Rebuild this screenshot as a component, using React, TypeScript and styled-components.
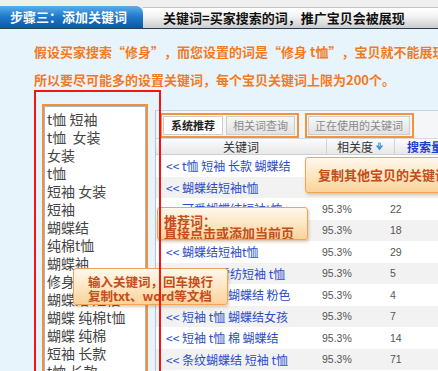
import styled, { createGlobalStyle } from "styled-components";

const GlobalStyle = createGlobalStyle`
  html, body {
    margin: 0;
    padding: 0;
  }
  body {
    background: #e8f4fc;
    font-family: "Noto Sans CJK SC", "Noto Sans", sans-serif;
    overflow: hidden;
  }
`;

const Page = styled.div`
  position: relative;
  width: 438px;
  height: 371px;
  overflow: hidden;
  background: #e8f4fc;
`;

const TopBar = styled.div`
  display: flex;
  align-items: flex-end;
  height: 28px;
  background: #efefef;
  border-bottom: 1px solid #2c3e52;
`;

const StepTab = styled.div`
  width: 143px;
  height: 22px;
  box-sizing: border-box;
  padding-left: 10px;
  border-radius: 0 7px 0 0;
  background: linear-gradient(#5aaeea, #1f78c8 50%, #0c58a6);
  color: #fff;
  font-size: 13px;
  font-weight: bold;
  line-height: 22px;
  white-space: nowrap;
`;

const HintBar = styled.div`
  flex: 1;
  height: 20px;
  padding-left: 20px;
  border-top: 1px solid #c4c4c4;
  background: linear-gradient(#ffffff, #f3f3f3 40%, #cdcdcd);
  color: #111;
  font-size: 13px;
  font-weight: bold;
  line-height: 20px;
  white-space: nowrap;
`;

const Notice = styled.div`
  padding: 9px 0 0 34px;
  color: #f47a1e;
  font-size: 13px;
  font-weight: bold;
  line-height: 28px;
  white-space: nowrap;
`;

const Quote = styled.span<{ $open?: boolean }>`
  display: inline-block;
  width: 13px;
  text-align: ${(p) => (p.$open ? "right" : "left")};
`;

const Main = styled.div`
  display: flex;
  align-items: flex-start;
  gap: 7px;
  padding: 10px 0 0 42px;
`;

const KeywordBox = styled.div`
  flex-shrink: 0;
  width: 106px;
  height: 290px;
  box-sizing: border-box;
  border: 2px solid #f39138;
`;

const KeywordText = styled.div`
  height: 100%;
  box-sizing: border-box;
  padding: 3px 0 0 2px;
  border: 1px solid #a3b6c8;
  background: #fff;
  color: #444;
  font-size: 14px;
  line-height: 18px;
  white-space: pre;
  overflow: hidden;
`;

const Panel = styled.div`
  flex: 1;
  margin-top: 6px;
  height: 300px;
  border-top: 1px solid #c9d3dc;
  border-left: 1px solid #b7c4d0;
  background: #fff;
  white-space: nowrap;
`;

const TabBar = styled.div`
  display: flex;
  align-items: flex-start;
  gap: 6px;
  height: 27px;
  box-sizing: border-box;
  padding: 2px 0 0 4px;
  background: #f4f6f8;
`;

const TabGroup = styled.div`
  display: flex;
  gap: 3px;
  height: 25px;
  box-sizing: border-box;
  padding: 1px 2px 1px 1px;
  border: 2px solid #f5923e;
`;

const Tab = styled.div<{ $active?: boolean }>`
  padding: 0 ${(p) => (p.$active ? 7 : 6)}px;
  border: 1px solid #cdcdcd;
  background: ${(p) =>
    p.$active ? "#fff" : "linear-gradient(#f7f7f7, #e2e2e2)"};
  color: ${(p) => (p.$active ? "#222" : "#8a8a8a")};
  font-size: 11px;
  font-weight: ${(p) => (p.$active ? "bold" : "normal")};
  line-height: 17px;
`;

const HeadRow = styled.div`
  display: flex;
  height: 17px;
  box-sizing: border-box;
  border-top: 1px solid #d8d8d8;
  border-bottom: 1px solid #d0d0d0;
  background: linear-gradient(#fbfbfb, #e8e8e8);
  color: #333;
  font-size: 12px;
  line-height: 15px;
`;

const HeadCell = styled.div<{ $width?: number; $link?: boolean }>`
  display: flex;
  align-items: center;
  justify-content: ${(p) => (p.$link ? "flex-start" : "center")};
  gap: 2px;
  width: ${(p) => (p.$width ? `${p.$width}px` : "auto")};
  flex: ${(p) => (p.$width ? "none" : 1)};
  padding-left: ${(p) => (p.$link ? 12 : 0)}px;
  border-right: ${(p) => (p.$link ? "none" : "1px solid #d2d2d2")};
  box-sizing: border-box;
  color: ${(p) => (p.$link ? "#1c3fd0" : "#333")};
  font-weight: ${(p) => (p.$link ? "bold" : "normal")};
`;

const Row = styled.div<{ $striped: boolean }>`
  display: flex;
  align-items: center;
  height: 21.5px;
  background: ${(p) => (p.$striped ? "#f2f2f2" : "#fff")};
`;

const KeyCell = styled.div`
  width: 166px;
  box-sizing: border-box;
  padding-left: 10px;
  color: #2a4cc8;
  font-size: 12px;
  overflow: hidden;
`;

const ValueCell = styled.div<{ $width?: number }>`
  width: ${(p) => (p.$width ? `${p.$width}px` : "auto")};
  color: #555;
  font-family: "Liberation Sans", Arial, sans-serif;
  font-size: 10.5px;
`;

const Tip = styled.div<{ $size: number }>`
  position: absolute;
  z-index: 2;
  box-sizing: border-box;
  border: 1px solid #f0a458;
  border-radius: 3px;
  background: linear-gradient(#fff8ec, #fde3bb 60%, #fbd29a);
  box-shadow: 1px 2px 3px rgba(170, 110, 40, 0.35);
  color: #c44d1a;
  font-size: ${(p) => p.$size}px;
  font-weight: bold;
  white-space: nowrap;
  overflow: hidden;
`;

const CopyTip = styled(Tip)`
  left: 305px;
  top: 157px;
  width: 150px;
  height: 36px;
  padding-left: 12px;
  line-height: 34px;
`;

const PickTip = styled(Tip)`
  left: 157px;
  top: 207px;
  width: 151px;
  height: 33px;
  padding: 7px 0 0 6px;
  line-height: 12px;
`;

const InputTip = styled(Tip)`
  left: 73px;
  top: 268px;
  width: 155px;
  height: 37px;
  padding: 6px 0 0 14px;
  line-height: 14px;
`;

const RedFrame = styled.div`
  position: absolute;
  z-index: 3;
  left: 34px;
  top: 90px;
  width: 127px;
  height: 300px;
  box-sizing: border-box;
  border: 2px solid #f51414;
`;

const SortIcon = () => (
  <svg width="9" height="9" viewBox="0 0 9 9">
    <path d="M4.5 8.5 L0.8 3.6 H3 V0.8 H6 V3.6 H8.2 Z" fill="#3c93dc" />
    <path d="M3.6 1.3 H5.4 V4.2 H3.6 Z" fill="#9fd0f5" />
  </svg>
);

const keywords = [
  "t恤 短袖",
  "t恤  女装",
  "女装",
  "t恤",
  "短袖 女装",
  "短袖",
  "蝴蝶结",
  "纯棉t恤",
  "蝴蝶袖",
  "修身 t恤",
  "蝴蝶结 短袖",
  "蝴蝶 纯棉t恤",
  "蝴蝶 纯棉",
  "短袖 长款",
  "t恤 长款",
];

const rows = [
  { word: "t恤 短袖 长款 蝴蝶结", rel: "95.3%", count: 35 },
  { word: "蝴蝶结短袖t恤", rel: "95.3%", count: 12 },
  { word: "可爱蝴蝶结短袖t恤", rel: "95.3%", count: 22 },
  { word: "韩版蝴蝶结短袖t恤", rel: "95.3%", count: 18 },
  { word: "蝴蝶结短袖t恤", rel: "95.3%", count: 29 },
  { word: "蝴蝶结雪纺短袖 t恤", rel: "95.3%", count: 5 },
  { word: "短袖 t恤 蝴蝶结 粉色", rel: "95.3%", count: 4 },
  { word: "短袖 t恤 蝴蝶结女孩", rel: "95.3%", count: 7 },
  { word: "短袖 t恤 棉 蝴蝶结", rel: "95.3%", count: 14 },
  { word: "条纹蝴蝶结 短袖 t恤", rel: "95.3%", count: 71 },
];

const App = () => {
  return (
    <Page>
      <GlobalStyle />
      <TopBar>
        <StepTab>步骤三：添加关键词</StepTab>
        <HintBar>关键词=买家搜索的词，推广宝贝会被展现</HintBar>
      </TopBar>
      <Notice>
        <div>
          假设买家搜索<Quote $open>“</Quote>修身<Quote>”</Quote>，而您设置的词是
          <Quote $open>“</Quote>修身 t恤<Quote>”</Quote>，宝贝就不能展现，
        </div>
        <div>所以要尽可能多的设置关键词，每个宝贝关键词上限为200个。</div>
      </Notice>
      <Main>
        <KeywordBox>
          <KeywordText>{keywords.join("\n")}</KeywordText>
        </KeywordBox>
        <Panel>
          <TabBar>
            <TabGroup>
              <Tab $active>系统推荐</Tab>
              <Tab>相关词查询</Tab>
            </TabGroup>
            <TabGroup>
              <Tab>正在使用的关键词</Tab>
            </TabGroup>
          </TabBar>
          <HeadRow>
            <HeadCell $width={171}>关键词</HeadCell>
            <HeadCell $width={68}>
              相关度
              <SortIcon />
            </HeadCell>
            <HeadCell $link>搜索量</HeadCell>
          </HeadRow>
          {rows.map((row, i) => (
            <Row key={i} $striped={i % 2 === 1}>
              <KeyCell>&lt;&lt; {row.word}</KeyCell>
              <ValueCell $width={68}>{row.rel}</ValueCell>
              <ValueCell>{row.count}</ValueCell>
            </Row>
          ))}
        </Panel>
      </Main>
      <CopyTip $size={13}>复制其他宝贝的关键词</CopyTip>
      <PickTip $size={13}>
        <div>推荐词：</div>
        <div>直接点击或添加当前页</div>
      </PickTip>
      <InputTip $size={12.5}>
        <div>输入关键词，回车换行</div>
        <div>复制txt、word等文档</div>
      </InputTip>
      <RedFrame />
    </Page>
  );
};

export default App;
